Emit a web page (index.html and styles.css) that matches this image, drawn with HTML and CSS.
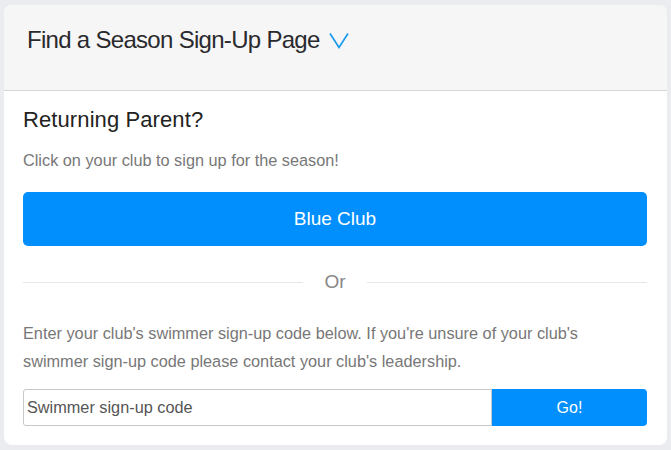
FILE: index.html
```html
<!DOCTYPE html>
<html lang="en">
<head>
    <meta charset="UTF-8">
    <meta name="viewport" content="width=device-width, initial-scale=1.0">
    <title>Find a Season Sign-Up Page</title>
    <link rel="stylesheet" href="styles.css">
</head>
<body>
    <div class="card">
        <div class="card-header">
            <h2>Find a Season Sign-Up Page</h2>
            <svg class="chevron" width="20" height="17" viewBox="0 0 20 17">
                <path d="M1 1.5 L10 15.5 L19 1.5" fill="none" stroke="#1a9bf0" stroke-width="1.7"/>
            </svg>
        </div>
        <div class="card-body">
            <h3>Returning Parent?</h3>
            <p class="muted lead">Click on your club to sign up for the season!</p>
            <button class="club-btn">Blue Club</button>
            <div class="divider"><span>Or</span></div>
            <p class="muted info">Enter your club's swimmer sign-up code below. If you're unsure of your club's swimmer sign-up code please contact your club's leadership.</p>
            <form class="code-form">
                <input type="text" placeholder="Swimmer sign-up code">
                <button type="submit">Go!</button>
            </form>
        </div>
    </div>
</body>
</html>
```

FILE: styles.css
```css
body {
    margin: 0;
    padding: 5px 4px;
    background-color: #ebecf0;
    font-family: "Liberation Sans", Arial, sans-serif;
}

.card {
    background-color: #fff;
    border-radius: 8px;
    overflow: hidden;
    height: 440px;
    box-sizing: border-box;
}

.card-header {
    display: flex;
    align-items: center;
    height: 86px;
    padding: 0 0 16px 23px;
    box-sizing: border-box;
    background-color: #f6f6f6;
    border-bottom: 1px solid #d6d6d6;
}

.card-header h2 {
    margin: 0;
    font-size: 24px;
    font-weight: normal;
    color: #2a2a2e;
    letter-spacing: -0.7px;
}

.chevron {
    margin-left: 9px;
    margin-top: 1px;
}

.card-body {
    padding: 16px 20px 0 19px;
}

h3 {
    margin: 0;
    font-size: 22px;
    font-weight: normal;
    color: #222;
    letter-spacing: 0.1px;
}

.muted {
    color: #777;
    margin: 0;
    font-size: 16.3px;
}

.lead {
    margin-top: 18px;
}

.club-btn {
    display: block;
    width: 100%;
    height: 54px;
    margin-top: 22px;
    font-size: 19px;
    font-family: inherit;
    color: #fff;
    background-color: #008ffd;
    border: none;
    border-radius: 5px;
    cursor: pointer;
}

.divider {
    display: flex;
    align-items: center;
    margin-top: 25px;
    color: #888;
    font-size: 19px;
}

.divider::before,
.divider::after {
    content: "";
    flex: 1;
    border-top: 1px solid #e8e8e8;
}

.divider span {
    padding: 0 21px;
}

.info {
    max-width: 590px;
    margin-top: 26px;
    line-height: 28px;
}

.code-form {
    display: flex;
    margin-top: 14px;
}

.code-form input {
    flex: 1;
    height: 37px;
    box-sizing: border-box;
    padding: 0 3px;
    font-size: 16.3px;
    font-family: inherit;
    border: 1px solid #c8c8c8;
    border-radius: 3px 0 0 3px;
}

.code-form input::placeholder {
    color: #555;
}

.code-form button {
    width: 155px;
    height: 37px;
    font-size: 16px;
    font-family: inherit;
    color: #fff;
    background-color: #008ffd;
    border: none;
    border-radius: 0 4px 4px 0;
    cursor: pointer;
}
```
